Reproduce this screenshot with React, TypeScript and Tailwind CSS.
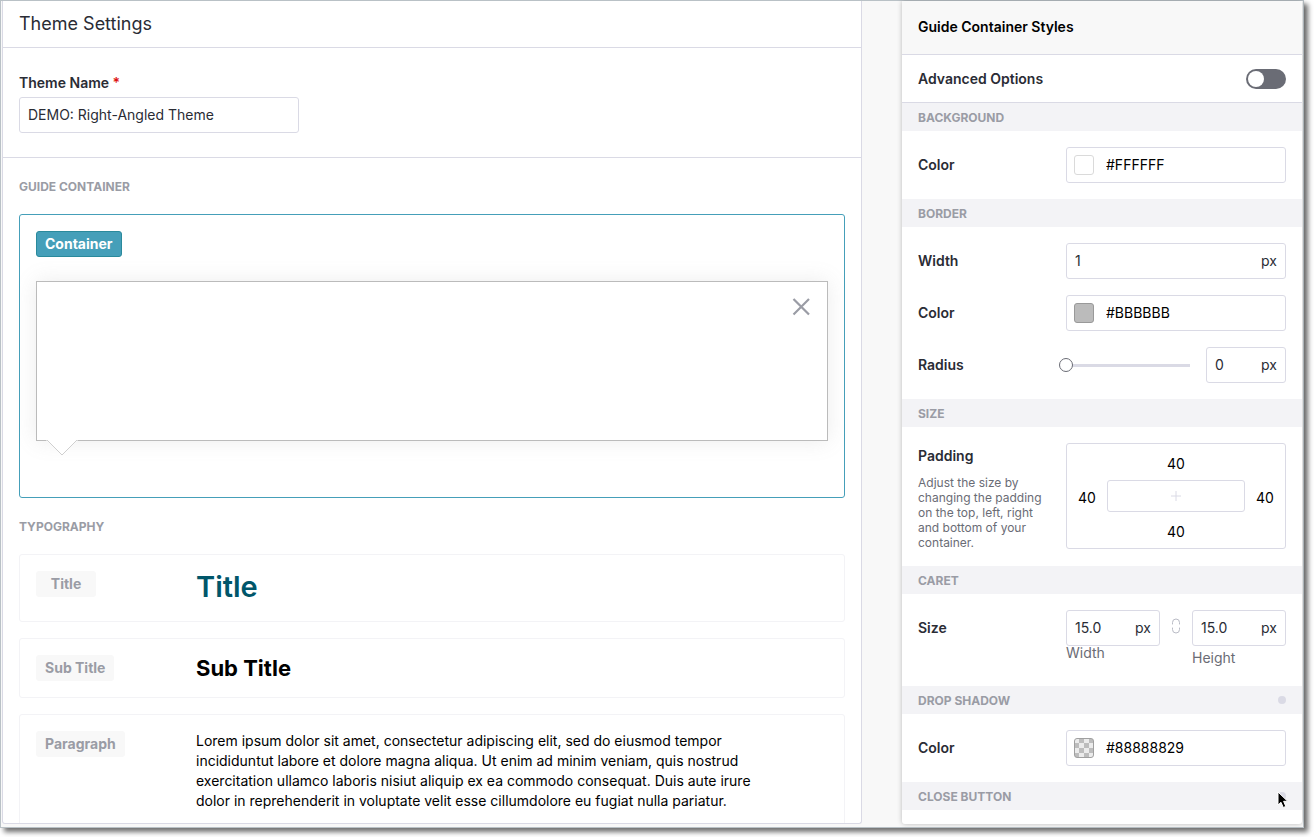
import { useState } from "react";
import type { ReactNode } from "react";

const fieldBox = "flex h-9 items-center rounded-[3px] border border-[#dadae5] bg-white";

function Tag({ children, active = false }: { children: ReactNode; active?: boolean }) {
  return (
    <button
      type="button"
      className={
        active
          ? "flex h-[26px] min-w-[60px] items-center justify-center rounded-[3px] border border-[#2a8a9c] bg-[#459fb9] px-2 font-bold text-white"
          : "flex h-[26px] min-w-[60px] items-center justify-center rounded-[3px] border border-[#f8f8f8] bg-[#f8f8f8] px-2 font-bold text-[#9a9ca5]"
      }
    >
      {children}
    </button>
  );
}

function GroupLabel({ children }: { children: ReactNode }) {
  return <h2 className="pt-0.5 text-xs font-bold text-[#9a9ca5]">{children}</h2>;
}

function Section({ title, dot = false, children }: { title: string; dot?: boolean; children?: ReactNode }) {
  return (
    <section>
      <div className="flex h-7 items-center justify-between bg-[#f3f3f6] px-4">
        <GroupLabel>{title}</GroupLabel>
        {dot && <span className="size-2 rounded-full bg-[#dadae5]" />}
      </div>
      {children && <div className="flex flex-col gap-4 p-4">{children}</div>}
    </section>
  );
}

function Row({ label, htmlFor, children }: { label: string; htmlFor: string; children: ReactNode }) {
  return (
    <div className="flex items-start justify-between">
      <label htmlFor={htmlFor} className="flex h-9 items-center font-semibold">
        {label}
      </label>
      <div className="w-[220px]">{children}</div>
    </div>
  );
}

function PxField({ id, value, label, className = "" }: { id: string; value: string; label?: string; className?: string }) {
  return (
    <div className={`${fieldBox} px-2 ${className}`}>
      <input id={id} aria-label={label} defaultValue={value} className="w-full min-w-0 flex-1 outline-none" />
      <span>px</span>
    </div>
  );
}

function ColorField({ id, value, swatch }: { id: string; value: string; swatch: ReactNode }) {
  return (
    <div className={`${fieldBox} gap-3 px-[7px] text-black`}>
      {swatch}
      <input id={id} defaultValue={value} className="min-w-0 flex-1 outline-none" />
    </div>
  );
}

function PaddingInput({ side }: { side: string }) {
  return (
    <input
      aria-label={`Padding ${side}`}
      defaultValue="40"
      className="h-[22px] w-10 pt-0.5 text-center text-black outline-none"
    />
  );
}

function TypeCard({ tag, children, className = "" }: { tag: string; children: ReactNode; className?: string }) {
  return (
    <div className={`flex items-start rounded-[3px] border border-[#f3f3f6] p-4 ${className}`}>
      <div className="flex w-40 shrink-0">
        <Tag>{tag}</Tag>
      </div>
      {children}
    </div>
  );
}

export default function App() {
  const [advanced, setAdvanced] = useState(false);
  const [radius, setRadius] = useState(0);

  return (
    <div className="h-screen overflow-hidden bg-white pr-[10px] pb-[9px] font-[Inter,'Liberation_Sans',sans-serif] text-sm text-[#2a2c35]">
      <div className="flex h-full gap-10 border border-[#b9c1c6] bg-[#f8f8f8] px-px pb-[3px] shadow-[4px_4px_5px_#00000090]">
        <main className="flex min-w-0 flex-1 flex-col overflow-hidden rounded-b-[3px] border border-t-0 border-[#dadae5] bg-white">
          <header className="flex h-[47px] shrink-0 items-center border-b border-[#dadae5] px-4">
            <h1 className="text-lg">Theme Settings</h1>
          </header>

          <div className="flex h-[110px] shrink-0 flex-col border-b border-[#dadae5] px-4 pt-[25px]">
            <label htmlFor="theme-name" className="mb-1 font-semibold">
              Theme Name <span className="text-[#dd0f0f]">*</span>
            </label>
            <input
              id="theme-name"
              defaultValue="DEMO: Right-Angled Theme"
              className="h-9 w-[280px] shrink-0 rounded-[3px] border border-[#dadae5] px-2 pb-0.5 outline-none"
            />
          </div>

          <div className="flex flex-col px-4">
            <div className="flex h-14 items-center">
              <GroupLabel>GUIDE CONTAINER</GroupLabel>
            </div>
            <div className="flex h-[284px] flex-col gap-6 rounded-[3px] border border-[#459fb9] p-4">
              <div className="flex">
                <Tag active>Container</Tag>
              </div>
              <div className="relative flex h-40 items-start justify-end border border-[#bbbbbb] bg-white px-[14px] py-3 shadow-[0_0_20px_#88888829]">
                <button type="button" aria-label="Close" className="size-6">
                  <svg viewBox="0 0 24 24" className="size-6" fill="none" stroke="#9a9ca5" strokeWidth="2.2">
                    <path d="M4.500 5 20 20.500M20 5 4.500 20.500" />
                  </svg>
                </button>
                <svg viewBox="0 0 32 16" className="absolute top-full left-[9px] h-4 w-8">
                  <path d="M0 0H32L16 15Z" fill="#fff" />
                  <path d="M1 0 16 15 31 0" fill="none" stroke="#cfcfcf" />
                </svg>
              </div>
            </div>

            <div className="flex h-14 items-center">
              <GroupLabel>TYPOGRAPHY</GroupLabel>
            </div>
            <div className="flex flex-col gap-4">
              <TypeCard tag="Title" className="h-[68px]">
                <p className="text-[29px] leading-8 font-semibold text-[#00566a]">Title</p>
              </TypeCard>
              <TypeCard tag="Sub Title" className="h-[60px]">
                <p className="text-[22px] leading-[26px] font-bold text-black">Sub Title</p>
              </TypeCard>
              <TypeCard tag="Paragraph">
                <p className="max-w-[570px] leading-5 text-black">
                  Lorem ipsum dolor sit amet, consectetur adipiscing elit, sed do eiusmod tempor incididuntut labore et
                  dolore magna aliqua. Ut enim ad minim veniam, quis nostrud exercitation ullamco laboris nisiut aliquip
                  ex ea commodo consequat. Duis aute irure dolor in reprehenderit in voluptate velit esse cillumdolore
                  eu fugiat nulla pariatur.
                </p>
              </TypeCard>
            </div>
          </div>
        </main>

        <aside className="w-[400px] shrink-0 overflow-hidden rounded-b-[3px] bg-white shadow-[0_0_5px_#00000040]">
          <header className="flex h-[54px] items-center border-b border-[#dadae5] bg-[#f8f8f8] px-4 pb-0.5">
            <h2 className="font-semibold text-black">Guide Container Styles</h2>
          </header>
          <div className="flex h-12 items-center justify-between border-b border-[#dadae5] px-4">
            <label htmlFor="advanced" className="font-semibold">
              Advanced Options
            </label>
            <input
              id="advanced"
              type="checkbox"
              role="switch"
              checked={advanced}
              onChange={(e) => setAdvanced(e.target.checked)}
              className="flex h-5 w-10 appearance-none items-center rounded-full bg-[#6a6c75] px-0.5 before:size-4 before:rounded-full before:bg-white checked:justify-end checked:bg-[#459fb9]"
            />
          </div>

          <Section title="BACKGROUND">
            <Row label="Color" htmlFor="bg-color">
              <ColorField
                id="bg-color"
                value="#FFFFFF"
                swatch={<span className="size-5 rounded-[3px] border border-[#dadada] bg-white" />}
              />
            </Row>
          </Section>

          <Section title="BORDER">
            <Row label="Width" htmlFor="border-width">
              <PxField id="border-width" value="1" />
            </Row>
            <Row label="Color" htmlFor="border-color">
              <ColorField
                id="border-color"
                value="#BBBBBB"
                swatch={<span className="size-5 rounded-[3px] border border-[#999999] bg-[#bbbbbb]" />}
              />
            </Row>
            <Row label="Radius" htmlFor="radius">
              <div className="flex items-center gap-4">
                <input
                  id="radius"
                  type="range"
                  min={0}
                  max={50}
                  value={radius}
                  onChange={(e) => setRadius(Number(e.target.value))}
                  className="-ml-[7px] h-[14px] min-w-0 flex-1 appearance-none bg-[linear-gradient(#dadae5,#dadae5)] bg-[length:calc(100%-7px)_3px] bg-right bg-no-repeat [&::-webkit-slider-thumb]:size-[14px] [&::-webkit-slider-thumb]:appearance-none [&::-webkit-slider-thumb]:rounded-full [&::-webkit-slider-thumb]:border [&::-webkit-slider-thumb]:border-[#6a6c75] [&::-webkit-slider-thumb]:bg-white"
                />
                <PxField id="radius-value" label="Radius value" value="0" className="w-20" />
              </div>
            </Row>
          </Section>

          <Section title="SIZE">
            <div className="flex items-start justify-between">
              <div className="w-[130px]">
                <h3 className="mb-2 pt-[3px] font-semibold">Padding</h3>
                <p className="pt-px text-xs leading-[15px] text-[#6a6c75]">
                  Adjust the size by changing the padding on the top, left, right and bottom of your container.
                </p>
              </div>
              <div className="flex h-[106px] w-[220px] flex-col items-center justify-between rounded-[3px] border border-[#dadae5] py-[7px]">
                <PaddingInput side="top" />
                <div className="flex w-full items-center">
                  <PaddingInput side="left" />
                  <div className="flex h-8 flex-1 items-center justify-center rounded-[3px] border border-[#dadae5]">
                    <svg viewBox="0 0 10 10" className="size-[10px]" stroke="#dadae5" strokeWidth="1">
                      <path d="M5 0V10M0 5H10" />
                    </svg>
                  </div>
                  <PaddingInput side="right" />
                </div>
                <PaddingInput side="bottom" />
              </div>
            </div>
          </Section>

          <Section title="CARET">
            <Row label="Size" htmlFor="caret-width">
              <div className="flex h-[60px] items-start justify-between">
                <div className="w-[94px]">
                  <PxField id="caret-width" value="15.0" />
                  <label htmlFor="caret-width" className="block leading-[14px] text-[#6a6c75]">
                    Width
                  </label>
                </div>
                <svg viewBox="0 0 10 16" className="mt-2 h-4 w-[10px]" fill="none" stroke="#b9bbc5" strokeLinecap="round">
                  <path d="M1.500 6V4.500a3.500 3.500 0 0 1 7 0V6M1.500 10v1.500a3.500 3.500 0 0 0 7 0V10" />
                </svg>
                <div className="w-[94px]">
                  <PxField id="caret-height" value="15.0" />
                  <label htmlFor="caret-height" className="block pt-[5px] leading-[14px] text-[#6a6c75]">
                    Height
                  </label>
                </div>
              </div>
            </Row>
          </Section>

          <Section title="DROP SHADOW" dot>
            <Row label="Color" htmlFor="shadow-color">
              <ColorField
                id="shadow-color"
                value="#88888829"
                swatch={
                  <span className="size-5 rounded-[3px] border border-[#a0a0a0] bg-[#ececec] bg-[repeating-conic-gradient(#bdbdbd_0_25%,#ececec_0_50%)] bg-[length:10px_10px] bg-origin-border" />
                }
              />
            </Row>
          </Section>

          <Section title="CLOSE BUTTON" dot />
        </aside>
      </div>

      <svg viewBox="0 0 12 18" className="pointer-events-none absolute top-[791px] left-[1277px] h-[18px] w-3">
        <path d="M1 1V14L4 11.300 6.300 16.500 8.800 15.400 6.600 10.300H10.700Z" fill="#000" stroke="#fff" strokeWidth="1" />
      </svg>
    </div>
  );
}
